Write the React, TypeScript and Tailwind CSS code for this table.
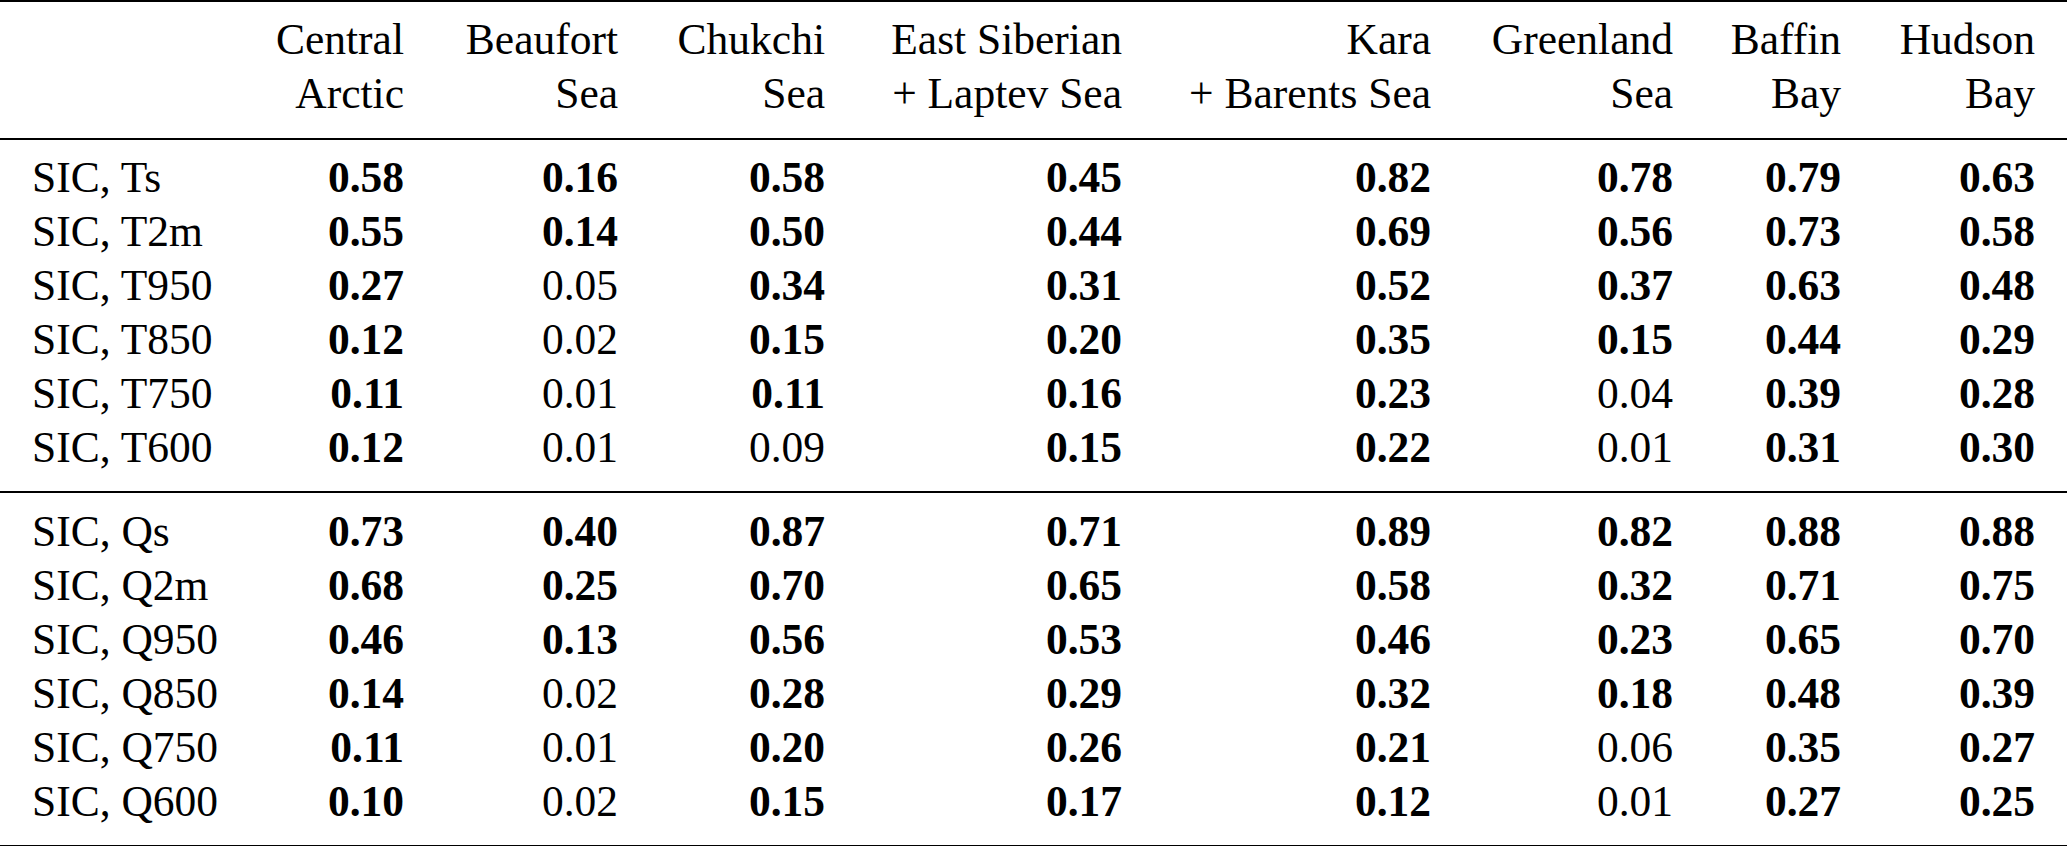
const columns = [
  ["Central", "Arctic"],
  ["Beaufort", "Sea"],
  ["Chukchi", "Sea"],
  ["East Siberian", "+ Laptev Sea"],
  ["Kara", "+ Barents Sea"],
  ["Greenland", "Sea"],
  ["Baffin", "Bay"],
  ["Hudson", "Bay"],
]

const temperatureRows: [string, string[]][] = [
  ["SIC, Ts", ["0.58", "0.16", "0.58", "0.45", "0.82", "0.78", "0.79", "0.63"]],
  ["SIC, T2m", ["0.55", "0.14", "0.50", "0.44", "0.69", "0.56", "0.73", "0.58"]],
  ["SIC, T950", ["0.27", "0.05", "0.34", "0.31", "0.52", "0.37", "0.63", "0.48"]],
  ["SIC, T850", ["0.12", "0.02", "0.15", "0.20", "0.35", "0.15", "0.44", "0.29"]],
  ["SIC, T750", ["0.11", "0.01", "0.11", "0.16", "0.23", "0.04", "0.39", "0.28"]],
  ["SIC, T600", ["0.12", "0.01", "0.09", "0.15", "0.22", "0.01", "0.31", "0.30"]],
]

const humidityRows: [string, string[]][] = [
  ["SIC, Qs", ["0.73", "0.40", "0.87", "0.71", "0.89", "0.82", "0.88", "0.88"]],
  ["SIC, Q2m", ["0.68", "0.25", "0.70", "0.65", "0.58", "0.32", "0.71", "0.75"]],
  ["SIC, Q950", ["0.46", "0.13", "0.56", "0.53", "0.46", "0.23", "0.65", "0.70"]],
  ["SIC, Q850", ["0.14", "0.02", "0.28", "0.29", "0.32", "0.18", "0.48", "0.39"]],
  ["SIC, Q750", ["0.11", "0.01", "0.20", "0.26", "0.21", "0.06", "0.35", "0.27"]],
  ["SIC, Q600", ["0.10", "0.02", "0.15", "0.17", "0.12", "0.01", "0.27", "0.25"]],
]

// same track widths for header and body so the right edges line up
const gridCols = "grid grid-cols-[218px_154px_214px_207px_297px_309px_242px_168px_194px]"

function Rows({ rows }: { rows: [string, string[]][] }) {
  return (
    <div className="px-[32px]">
      {rows.map(([label, values]) => (
        <div key={label} className={gridCols}>
          <div className="text-left">{label}</div>
          {values.map((v, i) => (
            <div key={i} className={parseFloat(v) >= 0.1 ? "text-right font-bold" : "text-right"}>
              {v}
            </div>
          ))}
        </div>
      ))}
    </div>
  )
}

export default function App() {
  return (
    <div
      className="w-[2067px] h-[846px] bg-white text-black text-[43.5px] leading-[54px] overflow-hidden"
      style={{ fontFamily: '"Liberation Serif", "Times New Roman", serif' }}
    >
      <div className="h-[2px] bg-black" />

      <div className="px-[32px] pt-[10px] pb-[18px]">
        <div className={gridCols}>
          <div />
          {columns.map(([top, bottom]) => (
            <div key={top} className="text-right">
              <div>{top}</div>
              <div>{bottom}</div>
            </div>
          ))}
        </div>
      </div>

      <div className="h-[2px] bg-black" />

      <div className="pt-[10px] pb-[17px]">
        <Rows rows={temperatureRows} />
      </div>

      <div className="h-[1.5px] bg-black" />

      <div className="pt-[11px] pb-[17px]">
        <Rows rows={humidityRows} />
      </div>

      <div className="h-[2px] bg-black" />
    </div>
  )
}
